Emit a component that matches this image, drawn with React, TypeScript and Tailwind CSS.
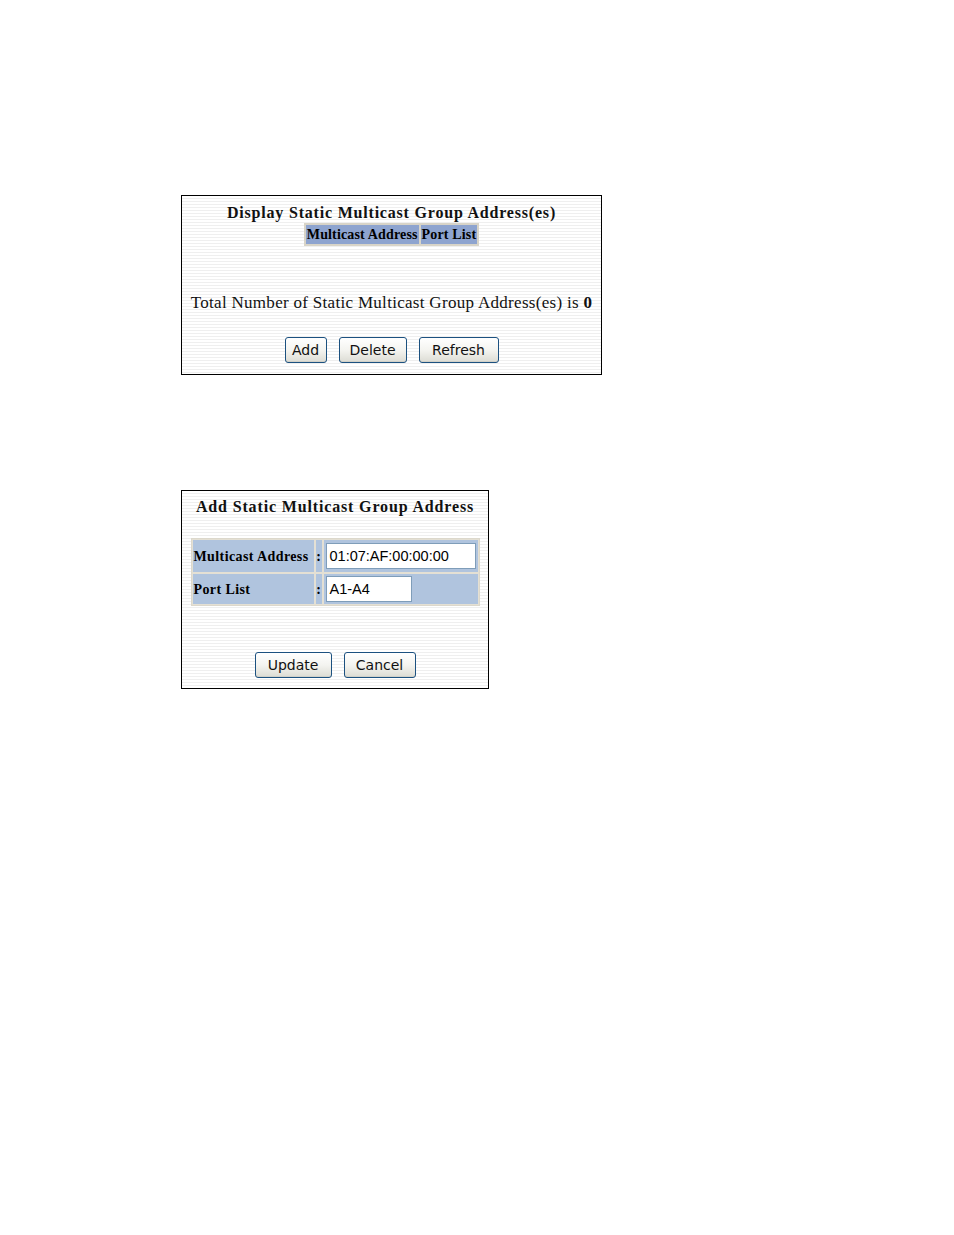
import React from "react";

const serif = { fontFamily: '"Liberation Serif", "Times New Roman", serif' };

function Btn({ label, w }: { label: string; w: string }) {
  return (
    <button
      className={`h-[26px] ${w} rounded-[3px] border border-[#1c5180] bg-gradient-to-b from-[#ffffff] via-[#f4f4f0] to-[#dcdcd4] leading-none text-[#111] shadow-[inset_0_-1px_0_#d0d0c8]`}
      style={{ fontFamily: '"DejaVu Sans", Tahoma, sans-serif', fontSize: "14px" }}
    >
      {label}
    </button>
  );
}

const stripes =
  "bg-[repeating-linear-gradient(to_bottom,#ffffff_0px,#ffffff_2px,#efefef_2px,#efefef_3px)]";

export default function App() {
  return (
    <div className="w-[954px] h-[1235px] bg-white" style={serif}>
      <div className="pt-[195px] pl-[181px] flex flex-col">
        {/* Box 1 */}
        <div className={`w-[421px] h-[180px] border border-black ${stripes} flex flex-col items-center`}>
          <div className="mt-[7px] text-[16px] font-bold leading-[20px] tracking-[0.8px] text-[#111]">
            Display Static Multicast Group Address(es)
          </div>
          <div className="mt-0 flex border border-[#d8d4c8] bg-[#d8d4c8] p-[1px] gap-[2px]">
            <div className="bg-[#8ea4cf] px-[1px] h-[19px] flex items-center text-[14px] font-bold tracking-[0.15px]">
              Multicast Address
            </div>
            <div className="bg-[#8ea4cf] px-[1px] h-[19px] flex items-center text-[14px] font-bold tracking-[0.15px]">
              Port List
            </div>
          </div>
          <div className="mt-[47px] text-[17px] leading-[20px] tracking-[0.3px] text-[#111]">
            Total Number of Static Multicast Group Address(es) is <b>0</b>
          </div>
          <div className="mt-[24px] flex gap-[12px]">
            <Btn label="Add" w="w-[42px]" />
            <Btn label="Delete" w="w-[68px]" />
            <Btn label="Refresh" w="w-[80px]" />
          </div>
        </div>

        {/* Box 2 */}
        <div className={`mt-[115px] w-[308px] h-[199px] border border-black ${stripes} flex flex-col items-center`}>
          <div className="mt-[6px] text-[16px] font-bold leading-[20px] tracking-[0.85px] text-[#111]">
            Add Static Multicast Group Address
          </div>
          <div className="mt-[21px] w-[289px] border border-[#dcd8cc] bg-[#e4e0d4] p-[1px] flex flex-col gap-[2px]">
            <div className="flex gap-[2px] h-[32px]">
              <div className="w-[121px] bg-[#b0c4de] flex items-center pl-[1px] text-[14px] font-bold tracking-[0.4px]">
                Multicast Address
              </div>
              <div className="w-[6px] bg-[#b0c4de] flex items-center justify-center text-[14px] font-bold">:</div>
              <div className="flex-1 bg-[#b0c4de] flex items-center pl-[2px]">
                <div
                  className="w-[150px] h-[26px] bg-white border border-[#7f9db9] flex items-center pl-[3px] pt-[1px]"
                  style={{ fontFamily: '"Liberation Sans", Arial, sans-serif', fontSize: "14.5px" }}
                >
                  01:07:AF:00:00:00
                </div>
              </div>
            </div>
            <div className="flex gap-[2px] h-[30px]">
              <div className="w-[121px] bg-[#b0c4de] flex items-center pl-[1px] text-[14px] font-bold tracking-[0.4px]">
                Port List
              </div>
              <div className="w-[6px] bg-[#b0c4de] flex items-center justify-center text-[14px] font-bold">:</div>
              <div className="flex-1 bg-[#b0c4de] flex items-center pl-[2px]">
                <div
                  className="w-[86px] h-[26px] bg-white border border-[#7f9db9] flex items-center pl-[3px] pt-[1px]"
                  style={{ fontFamily: '"Liberation Sans", Arial, sans-serif', fontSize: "14.5px" }}
                >
                  A1-A4
                </div>
              </div>
            </div>
          </div>
          <div className="mt-[46px] flex gap-[12px]">
            <Btn label="Update" w="w-[77px]" />
            <Btn label="Cancel" w="w-[72px]" />
          </div>
        </div>
      </div>
    </div>
  );
}
